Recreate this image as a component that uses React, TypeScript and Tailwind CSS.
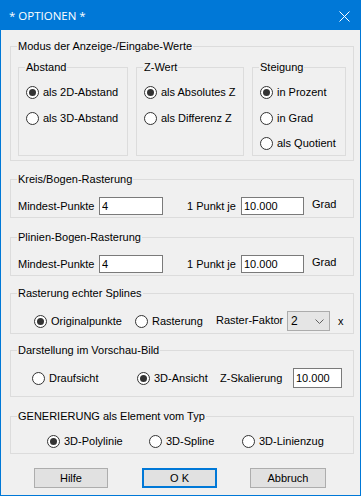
import React from "react";

const Group = ({
  title,
  className,
  children,
}: {
  title: string;
  className: string;
  children?: React.ReactNode;
}) => (
  <div className={`relative border border-[#dcdcdc] ${className}`}>
    <span className="absolute left-[6px] top-[-8px] bg-[#f0f0f0] px-[1px] leading-[14px] whitespace-nowrap">
      {title}
    </span>
    {children}
  </div>
);

const Radio = ({
  label,
  checked,
  className = "",
}: {
  label: string;
  checked?: boolean;
  className?: string;
}) => (
  <div className={`flex items-center h-[13px] ${className}`}>
    <span className="w-[13px] h-[13px] shrink-0 rounded-full border border-[#333333] bg-white flex items-center justify-center">
      {checked && <span className="w-[7px] h-[7px] rounded-full bg-[#333333]" />}
    </span>
    <span className="ml-[4px] leading-[13px] whitespace-nowrap">{label}</span>
  </div>
);

const Field = ({ value, className }: { value: string; className: string }) => (
  <input
    readOnly
    value={value}
    className={`border border-[#7a7a7a] bg-white px-[2px] text-[11px] leading-[14px] outline-none ${className}`}
  />
);

const Button = ({ label, primary, className }: { label: string; primary?: boolean; className: string }) => (
  <div
    className={`h-[20px] flex items-center justify-center bg-[#e1e1e1] ${
      primary ? "border-2 border-[#0078d7]" : "border border-[#adadad]"
    } ${className}`}
  >
    {label}
  </div>
);

const App = () => {
  return (
    <div className="w-[361px] h-[496px] border border-[#0078d7] bg-[#f0f0f0] flex flex-col text-[11px] text-black font-['Liberation_Sans',Arial,sans-serif] overflow-hidden">
      {/* title bar */}
      <div className="h-[29px] bg-[#0078d7] flex items-center justify-between pl-[8px] pr-[10px] text-white">
        <span className="text-[11.5px] font-['Segoe_UI','Open_Sans',sans-serif]">* OPTIONEN *</span>
        <svg width="11" height="11" viewBox="0 0 11 11" className="mt-[1px]">
          <path d="M0.5 0.5 L10.5 10.5 M10.5 0.5 L0.5 10.5" stroke="white" strokeWidth="1" />
        </svg>
      </div>

      <div className="flex flex-col pl-[9px]">
        {/* Modus */}
        <Group title="Modus der Anzeige-/Eingabe-Werte" className="mt-[16px] w-[344px] h-[115px]">
          <div className="flex gap-[8px] pt-[20px] pl-[7px]">
            <Group title="Abstand" className="w-[110px] h-[89px]">
              <div className="flex flex-col pt-[18px] pl-[7px]">
                <Radio label="als 2D-Abstand" checked />
                <Radio label="als 3D-Abstand" className="mt-[13px]" />
              </div>
            </Group>
            <Group title="Z-Wert" className="w-[108px] h-[89px]">
              <div className="flex flex-col pt-[18px] pl-[7px]">
                <Radio label="als Absolutes Z" checked />
                <Radio label="als Differenz Z" className="mt-[13px]" />
              </div>
            </Group>
            <Group title="Steigung" className="w-[94px] h-[89px]">
              <div className="flex flex-col pt-[18px] pl-[7px]">
                <Radio label="in Prozent" checked />
                <Radio label="in Grad" className="mt-[13px]" />
                <Radio label="als Quotient" className="mt-[12px]" />
              </div>
            </Group>
          </div>
        </Group>

        {/* Kreis/Bogen */}
        <Group title="Kreis/Bogen-Rasterung" className="mt-[18px] w-[344px] h-[39px]">
          <div className="flex items-center pt-[16px] pl-[7px]">
            <span className="w-[81px]">Mindest-Punkte</span>
            <Field value="4" className="w-[64px] h-[18px]" />
            <span className="ml-[24px] w-[54px]">1 Punkt je</span>
            <Field value="10.000" className="w-[63px] h-[18px]" />
            <span className="ml-[8px] mb-[4px]">Grad</span>
          </div>
        </Group>

        {/* Plinien */}
        <Group title="Plinien-Bogen-Rasterung" className="mt-[19px] w-[344px] h-[39px]">
          <div className="flex items-center pt-[16px] pl-[7px]">
            <span className="w-[81px]">Mindest-Punkte</span>
            <Field value="4" className="w-[64px] h-[18px]" />
            <span className="ml-[24px] w-[54px]">1 Punkt je</span>
            <Field value="10.000" className="w-[63px] h-[18px]" />
            <span className="ml-[8px] mb-[4px]">Grad</span>
          </div>
        </Group>

        {/* Splines */}
        <Group title="Rasterung echter Splines" className="mt-[17px] w-[344px] h-[41px]">
          <div className="flex items-center pt-[17px] pl-[23px]">
            <Radio label="Originalpunkte" checked className="w-[101px]" />
            <Radio label="Rasterung" className="w-[81px]" />
            <span className="w-[71px] mb-[2px]">Raster-Faktor</span>
            <div className="w-[43px] h-[20px] border border-[#acacac] bg-[#e5e5e5] flex items-center justify-between pl-[3px] pr-[5px]">
              <span className="text-[12px]">2</span>
              <svg width="9" height="5" viewBox="0 0 9 5">
                <path d="M0.5 0.5 L4.5 4.5 L8.5 0.5" stroke="#606060" strokeWidth="1" fill="none" />
              </svg>
            </div>
            <span className="ml-[8px]">x</span>
          </div>
        </Group>

        {/* Darstellung */}
        <Group title="Darstellung im Vorschau-Bild" className="mt-[16px] w-[344px] h-[47px]">
          <div className="flex items-center pt-[17px] pl-[21px]">
            <Radio label="Draufsicht" className="w-[105px]" />
            <Radio label="3D-Ansicht" checked className="w-[83px]" />
            <span className="w-[73px]">Z-Skalierung</span>
            <Field value="10.000" className="w-[49px] h-[20px]" />
          </div>
        </Group>

        {/* Generierung */}
        <Group title="GENERIERUNG als Element vom Typ" className="mt-[19px] w-[344px] h-[38px]">
          <div className="flex items-center pt-[18px] pl-[36px]">
            <Radio label="3D-Polylinie" checked className="w-[102px]" />
            <Radio label="3D-Spline" className="w-[93px]" />
            <Radio label="3D-Linienzug" />
          </div>
        </Group>

        {/* buttons */}
        <div className="flex mt-[14px]">
          <Button label="Hilfe" className="ml-[24px] w-[74px]" />
          <Button label="O K" primary className="ml-[34px] w-[75px]" />
          <Button label="Abbruch" className="ml-[33px] w-[76px]" />
        </div>
      </div>
    </div>
  );
};

export default App;
